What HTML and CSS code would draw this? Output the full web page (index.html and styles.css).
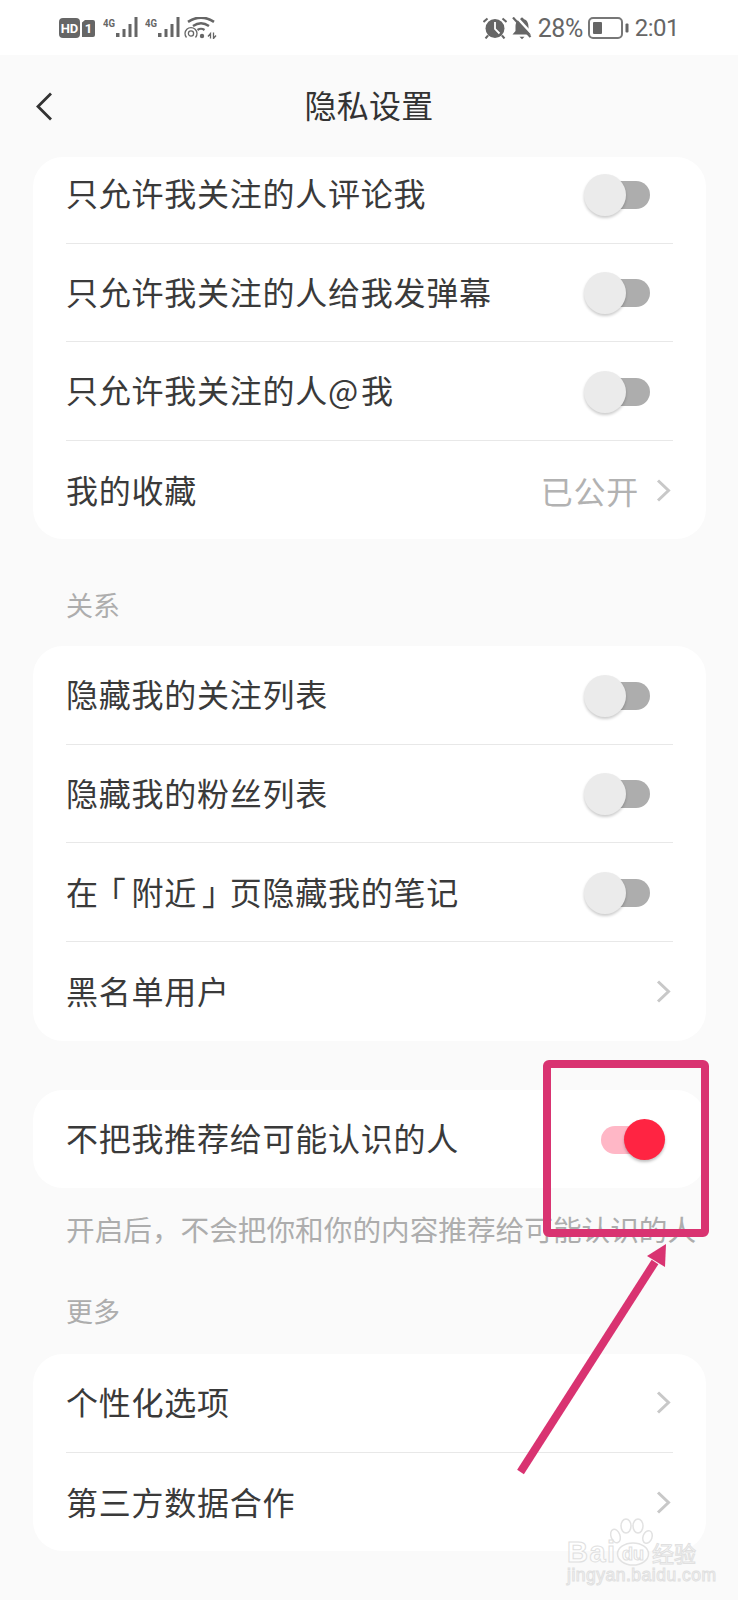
FILE: index.html
```html
<!DOCTYPE html>
<html lang="zh-CN">
<head>
<meta charset="utf-8">
<title>隐私设置</title>
<link rel="stylesheet" href="styles.css">
</head>
<body>
<div class="screen">
  <header class="status">
    <div class="status-left">
      <svg width="37" height="21" viewBox="0 0 37 21">
        <rect x="1" y="1" width="21" height="20" rx="4" fill="#666"/>
        <text x="11.5" y="15.500" class="hd-text" text-anchor="middle">HD</text>
        <path d="M24 5.500 27 3H35a2 2 0 0 1 2 2v13a2 2 0 0 1-2 2h-11z" fill="#666"/>
        <text x="30.500" y="16" class="hd-text" text-anchor="middle">1</text>
      </svg>
      <svg width="36" height="21" viewBox="0 0 36 21">
        <text x="0" y="9.500" class="g-text" textLength="12" lengthAdjust="spacingAndGlyphs">4G</text>
        <rect x="13" y="16" width="3.500" height="4" fill="#666"/><rect x="19.500" y="12" width="3" height="8" fill="#666"/><rect x="25.500" y="7" width="3" height="13" fill="#666"/><rect x="31.500" y="0" width="3" height="20" fill="#666"/>
      </svg>
      <svg width="36" height="21" viewBox="0 0 36 21">
        <text x="0" y="9.500" class="g-text" textLength="12" lengthAdjust="spacingAndGlyphs">4G</text>
        <rect x="13" y="16" width="3.500" height="4" fill="#666"/><rect x="19.500" y="12" width="3" height="8" fill="#666"/><rect x="25.500" y="7" width="3" height="13" fill="#666"/><rect x="31.500" y="0" width="3" height="20" fill="#666"/>
      </svg>
      <svg class="ic-wifi" width="33" height="22" viewBox="0 0 33 22" fill="none" stroke="#666">
        <path d="M4 4.800Q17-3.500 30 4.800" stroke-width="2.600"/>
        <path d="M9 9Q17 3.500 25 9" stroke-width="2.400"/>
        <path d="M13.500 13Q17 10.500 20.500 13" stroke-width="2.200"/>
        <circle cx="18" cy="19" r="2.200" fill="#666" stroke="none"/>
        <path d="M2.500 20.500A6 6 0 1 1 11.500 20.500" stroke-width="1.300"/>
        <circle cx="7" cy="16.500" r="2.600" stroke-width="1.300"/>
        <path d="M24 19.500l2.500-3v5M29.500 15.500v6l2.500-3" stroke-width="1.300"/>
      </svg>
    </div>
    <div class="status-right">
      <svg width="24" height="22" viewBox="0 0 24 22">
        <circle cx="12" cy="11.500" r="9.500" fill="#666"/>
        <path d="M12 5v7l4.500 4.500" fill="none" stroke="#fff" stroke-width="1.800"/>
        <path d="M0.500 5 4.500 1.500M23.500 5 19.500 1.500" stroke="#666" stroke-width="2"/>
        <path d="M5 18.500 2.500 21.500M19 18.500 21.500 21.500" stroke="#666" stroke-width="2"/>
      </svg>
      <svg width="21" height="23" viewBox="0 0 21 23">
        <path d="M10 0.500a1.600 1.600 0 0 1 1.600 1.600C15 3 16.500 6 16.500 10v4l3 3.500H0.500l3-3.500v-4c0-4 1.500-7 4.900-7.900A1.600 1.600 0 0 1 10 0.500z" fill="#666"/>
        <path d="M3.500-1 21 18" stroke="#fff" stroke-width="2.500"/>
        <path d="M1 0.500 18.500 20" stroke="#666" stroke-width="2.200"/>
        <path d="M7.500 19.800h5l-2.500 2.400z" fill="#666"/>
      </svg>
      <span class="status-pct">28%</span>
      <svg width="41" height="22" viewBox="0 0 41 22">
        <rect x="1" y="1" width="33" height="20" rx="4" fill="none" stroke="#777" stroke-width="2"/>
        <rect x="5" y="5" width="9" height="12" rx="1" fill="#666"/>
        <rect x="37.500" y="6.500" width="3" height="9" rx="1" fill="#666"/>
      </svg>
      <span class="status-time">2:01</span>
    </div>
  </header>

  <nav class="nav">
    <svg class="nav-back" width="17" height="29" viewBox="0 0 17 29"><path d="M15 1.500 2 14.500 15 27.500" fill="none" stroke="#333" stroke-width="2.800"/></svg>
    <h1 class="nav-title">隐私设置</h1>
  </nav>

  <section class="card card-top">
    <div class="row row-first"><span class="row-text">只允许我关注的人评论我</span><i class="toggle"></i></div>
    <div class="row"><span class="row-text">只允许我关注的人给我发弹幕</span><i class="toggle"></i></div>
    <div class="row"><span class="row-text">只允许我关注的人<span class="at">@ </span>我</span><i class="toggle"></i></div>
    <div class="row"><span class="row-text">我的收藏</span>
      <div class="row-end"><span class="value">已公开</span><svg class="chev" width="15" height="23" viewBox="0 0 15 23"><path d="M2 1.500 12.500 11.500 2 21.500" fill="none" stroke="#c8c8c8" stroke-width="3"/></svg></div>
    </div>
  </section>

  <h2 class="label label-rel">关系</h2>

  <section class="card">
    <div class="row"><span class="row-text">隐藏我的关注列表</span><i class="toggle"></i></div>
    <div class="row"><span class="row-text">隐藏我的粉丝列表</span><i class="toggle"></i></div>
    <div class="row"><span class="row-text">在<span class="br-open">「</span>附近<span class="br-close">」</span>页隐藏我的笔记</span><i class="toggle"></i></div>
    <div class="row"><span class="row-text">黑名单用户</span>
      <div class="row-end"><svg class="chev" width="15" height="23" viewBox="0 0 15 23"><path d="M2 1.500 12.500 11.500 2 21.500" fill="none" stroke="#c8c8c8" stroke-width="3"/></svg></div>
    </div>
  </section>

  <section class="card card-solo">
    <div class="row row-solo"><span class="row-text">不把我推荐给可能认识的人</span><i class="toggle-on"></i></div>
  </section>
  <p class="note">开启后，不会把你和你的内容推荐给可能认识的人</p>

  <h2 class="label label-more">更多</h2>

  <section class="card">
    <div class="row"><span class="row-text">个性化选项</span>
      <div class="row-end"><svg class="chev" width="15" height="23" viewBox="0 0 15 23"><path d="M2 1.500 12.500 11.500 2 21.500" fill="none" stroke="#c8c8c8" stroke-width="3"/></svg></div>
    </div>
    <div class="row"><span class="row-text">第三方数据合作</span>
      <div class="row-end"><svg class="chev" width="15" height="23" viewBox="0 0 15 23"><path d="M2 1.500 12.500 11.500 2 21.500" fill="none" stroke="#c8c8c8" stroke-width="3"/></svg></div>
    </div>
  </section>

  <svg class="overlay" width="738" height="1600" viewBox="0 0 738 1600">
    <rect x="547" y="1064" width="158" height="169" rx="2" fill="none" stroke="#d93371" stroke-width="8"/>
    <path d="M520.500 1472 655 1262" fill="none" stroke="#d93371" stroke-width="8"/>
    <path d="M666 1244 665 1267 647 1256z" fill="#d93371"/>
    <g class="wm">
      <ellipse cx="633" cy="1554" rx="15.500" ry="11"/>
      <ellipse cx="615.500" cy="1536" rx="4.500" ry="7" transform="rotate(-20 615.500 1536)"/>
      <ellipse cx="626" cy="1526" rx="5" ry="7"/>
      <ellipse cx="638" cy="1526" rx="5" ry="7"/>
      <ellipse cx="647.500" cy="1537" rx="4.500" ry="6.500" transform="rotate(20 647.500 1537)"/>
      <text x="567" y="1562" class="wm-big">Bai</text>
      <text x="622" y="1560" class="wm-du">du</text>
      <text x="652" y="1562" class="wm-cn">经验</text>
      <text x="567" y="1581" class="wm-url">jingyan.baidu.com</text>
    </g>
  </svg>
</div>
</body>
</html>
```
FILE: styles.css
```css
* { box-sizing: border-box; }
html, body { margin: 0; padding: 0; }
body {
  background: #fafafa;
  font-family: "Noto Sans CJK SC", "Noto Sans", sans-serif;
  color: #333;
}
.screen {
  position: relative;
  width: 738px;
  height: 1600px;
  overflow: hidden;
  background: #fafafa;
}
.status {
  height: 55px;
  background: #fff;
  display: flex;
  justify-content: space-between;
  align-items: flex-start;
  padding: 17px 59px 0 58px;
}
.status-left { display: flex; align-items: flex-start; gap: 6px; }
.status-left > svg:first-child { margin-right: 2px; }
.ic-wifi { margin-left: -3px; }
.status-right {
  display: flex;
  align-items: center;
  height: 22px;
  gap: 5px;
  font-family: Roboto, "Liberation Sans", sans-serif;
  font-size: 25px;
  color: #666;
}
.status-pct { letter-spacing: -0.5px; }
.status-time { margin-left: 1px; font-size: 24px; letter-spacing: -0.5px; }
.hd-text { font: bold 13px Roboto, "Liberation Sans", sans-serif; fill: #fff; }
.g-text { font: bold 11px Roboto, "Liberation Sans", sans-serif; fill: #666; }

.nav {
  height: 102px;
  display: flex;
  align-items: center;
  justify-content: center;
  position: relative;
  padding-bottom: 4px;
}
.nav-back { position: absolute; left: 36px; top: 37px; }
.nav-title { margin: 0; font-size: 32px; font-weight: 400; line-height: 44px; letter-spacing: .3px; color: #333; }

.card {
  margin: 0 32px 0 33px;
  background: #fff;
  border-radius: 30px;
  padding: 0 33px;
  overflow: hidden;
}
.card-top { height: 382px; }
.card-solo { margin-top: 49.500px; height: 97.500px; }
.row {
  display: flex;
  align-items: center;
  justify-content: space-between;
  height: 98.670px;
  border-bottom: 1px solid #e8e8e8;
  font-size: 32px;
  line-height: 44px;
  letter-spacing: .75px;
  color: #3a3a3a;
}
.row:last-child { border-bottom: 0; }
.row-text { padding-bottom: 3px; }
.at { letter-spacing: -2.250px; }
.br-open, .br-close {
  display: inline-block;
  font-family: "Noto Sans CJK TC", "Noto Sans CJK SC", sans-serif;
}
.br-open { transform: translateX(-5px); }
.br-close { transform: translateX(5px); }
.row-first { height: 86.500px; padding-bottom: 12px; }
.row-solo { height: 97.500px; }
.row-end { display: flex; align-items: center; gap: 17px; margin-right: 2px; }
.value { color: #b2b2b2; }

.toggle, .toggle-on {
  position: relative;
  display: block;
  flex: none;
  height: 28px;
  margin-top: 2px;
  border-radius: 14px;
}
.toggle { width: 52px; background: #adadad; margin-right: 23px; }
.toggle::after {
  content: "";
  position: absolute;
  left: -14px;
  top: -7px;
  width: 42px;
  height: 42px;
  border-radius: 50%;
  background: #ebebeb;
  box-shadow: 0 2px 3px rgba(0,0,0,.2);
}
.toggle-on { width: 52px; background: #ffb7c6; margin-right: 20px; }
.toggle-on::after {
  content: "";
  position: absolute;
  right: -12px;
  top: -7px;
  width: 41px;
  height: 41px;
  border-radius: 50%;
  background: #ff2442;
  box-shadow: 0 2px 3px rgba(0,0,0,.25);
}

.label {
  margin: 0;
  padding-left: 66px;
  font-size: 27px;
  font-weight: 400;
  line-height: 36px;
  color: #adadad;
}
.label-rel { padding-top: 48px; padding-bottom: 23px; }
.label-more { padding-top: 45px; padding-bottom: 25px; }
.note {
  margin: 0;
  padding: 22.500px 0 0 66px;
  font-size: 28.650px;
  line-height: 38px;
  color: #adadad;
  white-space: nowrap;
}
.chev { display: block; }

.overlay { position: absolute; left: 0; top: 0; pointer-events: none; }
.wm ellipse { fill: rgba(255,255,255,.5); stroke: #e2e2e2; stroke-width: 1.500; }
.wm text { fill: rgba(255,255,255,.6); stroke: #e0e0e0; stroke-width: 1; }
.wm-big { font: bold 29px "Liberation Sans", sans-serif; letter-spacing: 1.500px; }
.wm-du { font: bold 18px "Liberation Sans", sans-serif; }
.wm-cn { font: 22px "Noto Sans CJK SC", sans-serif; }
.wm-url { font: 17.500px "Liberation Sans", sans-serif; letter-spacing: .5px; }
```
